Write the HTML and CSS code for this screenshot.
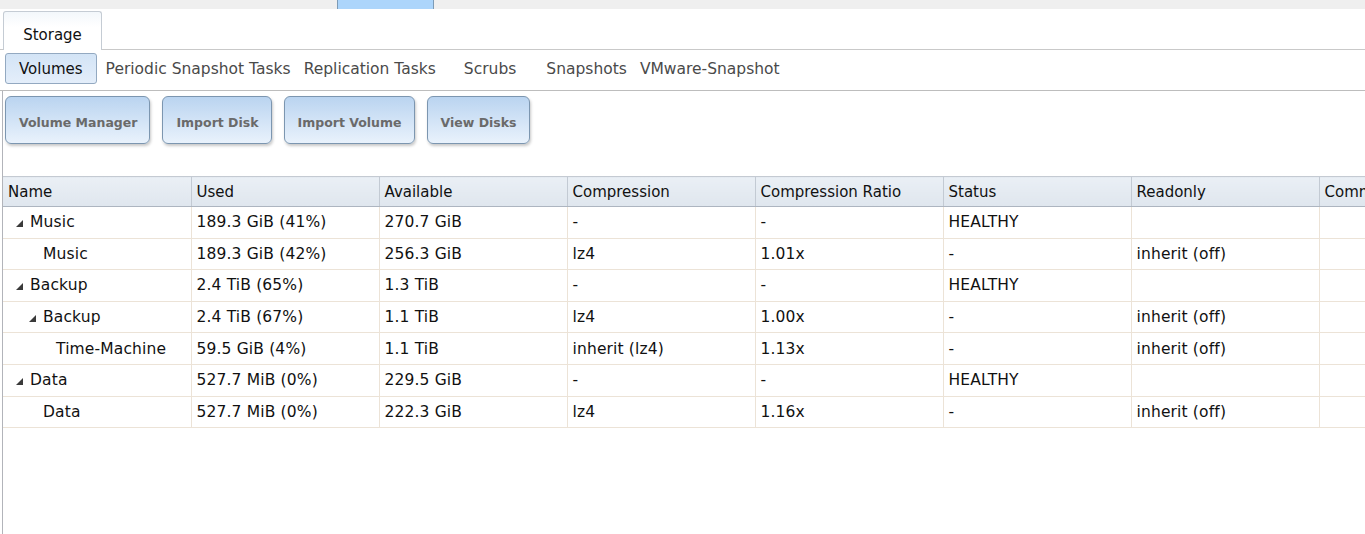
FILE: index.html
```html
<!DOCTYPE html>
<html lang="en">
<head>
    <meta charset="UTF-8">
    <title>Storage</title>
    <link rel="stylesheet" href="styles.css">
</head>
<body>
    <div class="topbar">
        <div class="top-tab"></div>
    </div>

    <div class="tabs">
        <div class="tab active">Storage</div>
    </div>

    <div class="subnav">
        <span class="sub active">Volumes</span>
        <span class="sub">Periodic Snapshot Tasks</span>
        <span class="sub">Replication Tasks</span>
        <span class="sub wide">Scrubs</span>
        <span class="sub">Snapshots</span>
        <span class="sub">VMware-Snapshot</span>
    </div>

    <div class="pane">
        <div class="actions">
            <button>Volume Manager</button>
            <button>Import Disk</button>
            <button>Import Volume</button>
            <button>View Disks</button>
        </div>

        <table class="grid">
            <thead>
                <tr>
                    <th>Name</th>
                    <th>Used</th>
                    <th>Available</th>
                    <th>Compression</th>
                    <th>Compression Ratio</th>
                    <th>Status</th>
                    <th>Readonly</th>
                    <th>Comments</th>
                </tr>
            </thead>
            <tbody>
                <tr>
                    <td class="name lvl0"><span class="exp open"></span>Music</td>
                    <td>189.3 GiB (41%)</td>
                    <td>270.7 GiB</td>
                    <td>-</td>
                    <td>-</td>
                    <td>HEALTHY</td>
                    <td></td>
                    <td></td>
                </tr>
                <tr>
                    <td class="name lvl1"><span class="exp"></span>Music</td>
                    <td>189.3 GiB (42%)</td>
                    <td>256.3 GiB</td>
                    <td>lz4</td>
                    <td>1.01x</td>
                    <td>-</td>
                    <td>inherit (off)</td>
                    <td></td>
                </tr>
                <tr>
                    <td class="name lvl0"><span class="exp open"></span>Backup</td>
                    <td>2.4 TiB (65%)</td>
                    <td>1.3 TiB</td>
                    <td>-</td>
                    <td>-</td>
                    <td>HEALTHY</td>
                    <td></td>
                    <td></td>
                </tr>
                <tr>
                    <td class="name lvl1"><span class="exp open"></span>Backup</td>
                    <td>2.4 TiB (67%)</td>
                    <td>1.1 TiB</td>
                    <td>lz4</td>
                    <td>1.00x</td>
                    <td>-</td>
                    <td>inherit (off)</td>
                    <td></td>
                </tr>
                <tr>
                    <td class="name lvl2"><span class="exp"></span>Time-Machine</td>
                    <td>59.5 GiB (4%)</td>
                    <td>1.1 TiB</td>
                    <td>inherit (lz4)</td>
                    <td>1.13x</td>
                    <td>-</td>
                    <td>inherit (off)</td>
                    <td></td>
                </tr>
                <tr>
                    <td class="name lvl0"><span class="exp open"></span>Data</td>
                    <td>527.7 MiB (0%)</td>
                    <td>229.5 GiB</td>
                    <td>-</td>
                    <td>-</td>
                    <td>HEALTHY</td>
                    <td></td>
                    <td></td>
                </tr>
                <tr>
                    <td class="name lvl1"><span class="exp"></span>Data</td>
                    <td>527.7 MiB (0%)</td>
                    <td>222.3 GiB</td>
                    <td>lz4</td>
                    <td>1.16x</td>
                    <td>-</td>
                    <td>inherit (off)</td>
                    <td></td>
                </tr>
            </tbody>
        </table>
    </div>
</body>
</html>
```

FILE: styles.css
```css
* {
    margin: 0;
    padding: 0;
    box-sizing: border-box;
}

html, body {
    height: 100%;
}

body {
    background: white;
    font-family: "DejaVu Sans", Verdana, sans-serif;
    font-size: 15px;
    color: #111;
    overflow: hidden;
    display: flex;
    flex-direction: column;
}

/* barra superior */
.topbar {
    height: 9px;
    background: #efefef;
    padding-left: 337px;
}

.top-tab {
    width: 97px;
    height: 9px;
    background: #acd5fb;
    border-left: 1px solid #7d9bb6;
    border-right: 1px solid #7d9bb6;
}

/* pestañas */
.tabs {
    display: flex;
    padding: 2px 0 0 3px;
    border-bottom: 1px solid #c9c9c9;
}

.tab {
    width: 99px;
    height: 39px;
    margin-bottom: -1px;
    padding-top: 14px;
    text-align: center;
    background: linear-gradient(#f3f7fb, #ffffff 40%);
    border: 1px solid #c5ccd4;
    border-bottom: none;
    border-radius: 3px 3px 0 0;
}

.subnav {
    display: flex;
    align-items: flex-start;
    height: 41px;
    padding: 3px 0 0 5px;
    border-bottom: 1px solid #bdbdbd;
    color: #4a4a4a;
    font-size: 15.5px;
}

.sub {
    line-height: 29px;
    padding: 2px 6px 0 7px;
    white-space: nowrap;
}

.sub.active {
    color: #111;
    font-size: 15px;
    line-height: 27px;
    padding: 2px 13px 0 13px;
    margin-right: 2px;
    background: linear-gradient(#d3e4f6, #e4eefa);
    border: 1px solid #93a9c1;
    border-radius: 3px;
}

.sub.wide {
    padding: 2px 23px 0 22px;
}

.pane {
    flex: 1;
    margin-left: 2px;
    border-left: 1px solid #b2b4ba;
}

.actions {
    display: flex;
    gap: 12px;
    height: 85px;
    padding: 5px 0 0 2px;
}

button {
    height: 48px;
    padding: 4px 12px 0 13px;
    font-family: "DejaVu Sans", Verdana, sans-serif;
    font-size: 12.5px;
    font-weight: bold;
    color: #6a6a6a;
    background: linear-gradient(#bad4f0, #e9f2fc);
    border: 1px solid #7c96b0;
    border-radius: 6px;
    box-shadow: 1px 2px 3px rgba(0, 0, 0, 0.22);
    cursor: pointer;
}

.grid {
    border-collapse: collapse;
    table-layout: fixed;
    width: 1504px;
}

.grid th,
.grid td {
    width: 188px;
    text-align: left;
    font-weight: normal;
    white-space: nowrap;
    overflow: hidden;
    padding-left: 5px;
}

.grid th {
    height: 30px;
    background: linear-gradient(#eaeff5, #dfe6ee);
    border-top: 1px solid #c4cad2;
    border-bottom: 1px solid #adb5c0;
    border-right: 1px solid #c3cad3;
}

.grid td {
    height: 31.6px;
    font-size: 15.5px;
    letter-spacing: 0.15px;
    border-bottom: 1px solid #ece3d7;
    border-right: 1px solid #ece3d7;
}

.grid td.lvl0 { padding-left: 13px; }
.grid td.lvl1 { padding-left: 26px; }
.grid td.lvl2 { padding-left: 39px; }

.exp {
    display: inline-block;
    width: 14px;
}

.exp.open::before {
    content: "";
    display: inline-block;
    width: 0;
    height: 0;
    border-left: 7px solid transparent;
    border-bottom: 7px solid #3a3a3a;
}
```
